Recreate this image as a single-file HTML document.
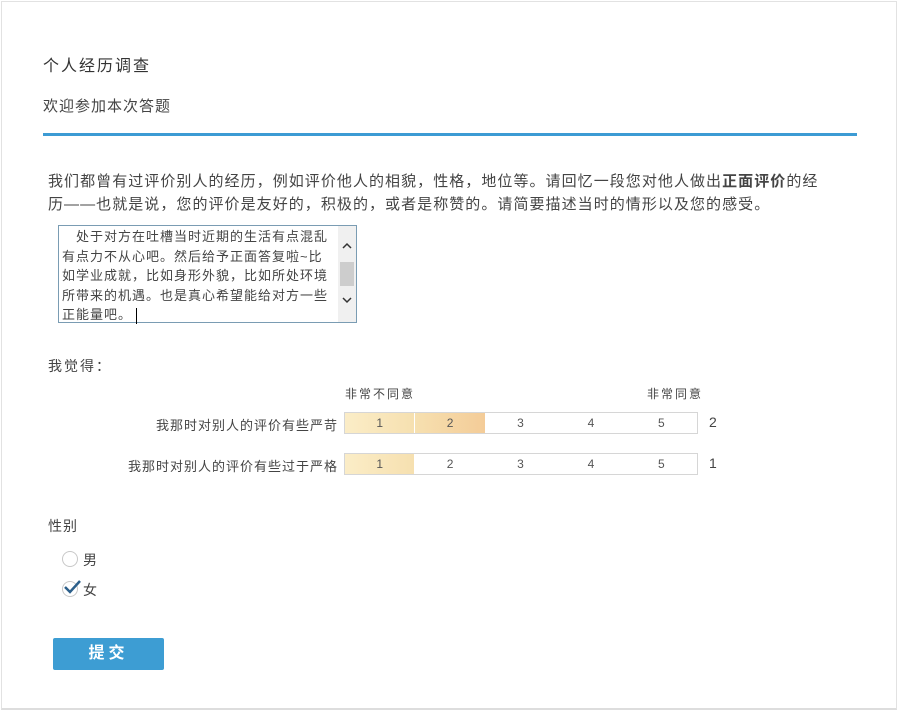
<!DOCTYPE html>
<html><head><meta charset="utf-8"><style>
body{margin:0;width:898px;height:712px;background:#fff;font-family:"Liberation Sans","Microsoft YaHei","Noto Sans CJK SC",sans-serif;color:#444;position:relative;overflow:hidden}
.frame{position:absolute;left:1px;top:1px;width:894px;height:706px;border:1px solid #e2e2e2;border-bottom:2px solid #ddd}
.a{position:absolute;white-space:nowrap}
.bar{position:absolute;left:344px;width:352px;height:20px;border:1px solid #d6d6d6;display:flex}
.bar div{width:70px;text-align:center;font-size:12px;line-height:20px;color:#555;margin-right:1px}
.lbl{position:absolute;right:560px;font-size:13px;letter-spacing:1px;color:#444;white-space:nowrap}
</style></head><body>
<div class="frame"></div>
<div class="a" style="left:43px;top:52px;font-size:16px;letter-spacing:2px;color:#333">个人经历调查</div>
<div class="a" style="left:43px;top:95px;font-size:15px;letter-spacing:1px;color:#444">欢迎参加本次答题</div>
<div class="a" style="left:43px;top:133px;width:814px;height:3px;background:#3c9bd4"></div>
<div class="a" style="left:48px;top:170px;font-size:15px;line-height:23px;letter-spacing:1.05px;color:#444">我们都曾有过评价别人的经历，例如评价他人的相貌，性格，地位等。请回忆一段您对他人做出<b>正面评价</b>的经<br>历——也就是说，您的评价是友好的，积极的，或者是称赞的。请简要描述当时的情形以及您的感受。</div>
<div class="a" style="left:58px;top:225px;width:297px;height:96px;border:1px solid #7a9cb3;background:#fff"></div>
<div class="a" style="left:338px;top:226px;width:18px;height:96px;background:#f0f0f0"></div>
<div class="a" style="left:340px;top:262px;width:14px;height:24px;background:#cdcdcd"></div>
<svg class="a" style="left:341px;top:242px" width="12" height="8"><path d="M2 6 L6 2 L10 6" stroke="#333" stroke-width="1.5" fill="none"/></svg>
<svg class="a" style="left:341px;top:296px" width="12" height="8"><path d="M2 2 L6 6 L10 2" stroke="#333" stroke-width="1.5" fill="none"/></svg>
<div class="a" style="left:62px;top:227px;font-size:13px;line-height:19.5px;letter-spacing:1px;color:#444">　处于对方在吐槽当时近期的生活有点混乱<br>有点力不从心吧。然后给予正面答复啦~比<br>如学业成就，比如身形外貌，比如所处环境<br>所带来的机遇。也是真心希望能给对方一些<br>正能量吧。<span style="display:inline-block;width:1px;height:16px;background:#000;vertical-align:middle;margin-left:4px"></span></div>
<div class="a" style="left:48px;top:356px;font-size:14px;letter-spacing:2px">我觉得：</div>
<div class="a" style="left:345px;top:385px;font-size:12px;letter-spacing:2px">非常不同意</div>
<div class="a" style="left:647px;top:385px;font-size:12px;letter-spacing:2px">非常同意</div>
<div class="lbl" style="top:415px">我那时对别人的评价有些严苛</div>
<div class="bar" style="top:412px"><div style="background:linear-gradient(90deg,#fbedc7,#f6e0b0)">1</div><div style="background:linear-gradient(90deg,#f6e0b0,#f4cc98)">2</div><div>3</div><div>4</div><div>5</div></div>
<div class="a" style="left:709px;top:414px;font-size:14px">2</div>
<div class="lbl" style="top:456px">我那时对别人的评价有些过于严格</div>
<div class="bar" style="top:453px"><div style="background:linear-gradient(90deg,#fbedc7,#f6e0b0)">1</div><div>2</div><div>3</div><div>4</div><div>5</div></div>
<div class="a" style="left:709px;top:455px;font-size:14px">1</div>
<div class="a" style="left:48px;top:516px;font-size:14px;letter-spacing:1px">性别</div>
<div class="a" style="left:62px;top:551px;width:14px;height:14px;border:1px solid #c8c8c8;border-radius:50%"></div>
<div class="a" style="left:83px;top:550px;font-size:14px">男</div>
<div class="a" style="left:62px;top:581px;width:14px;height:14px;border:1px solid #c8c8c8;border-radius:50%"></div>
<svg class="a" style="left:62px;top:578px" width="20" height="18"><path d="M3 9 L8 14 L18 3" stroke="#2c5f8a" stroke-width="2.5" fill="none"/></svg>
<div class="a" style="left:83px;top:580px;font-size:14px">女</div>
<div class="a" style="left:53px;top:638px;width:111px;height:32px;background:#3d9dd3;border-radius:2px;color:#fff;font-size:16px;font-weight:bold;text-align:center;line-height:32px;letter-spacing:4px">提交</div>
</body></html>
